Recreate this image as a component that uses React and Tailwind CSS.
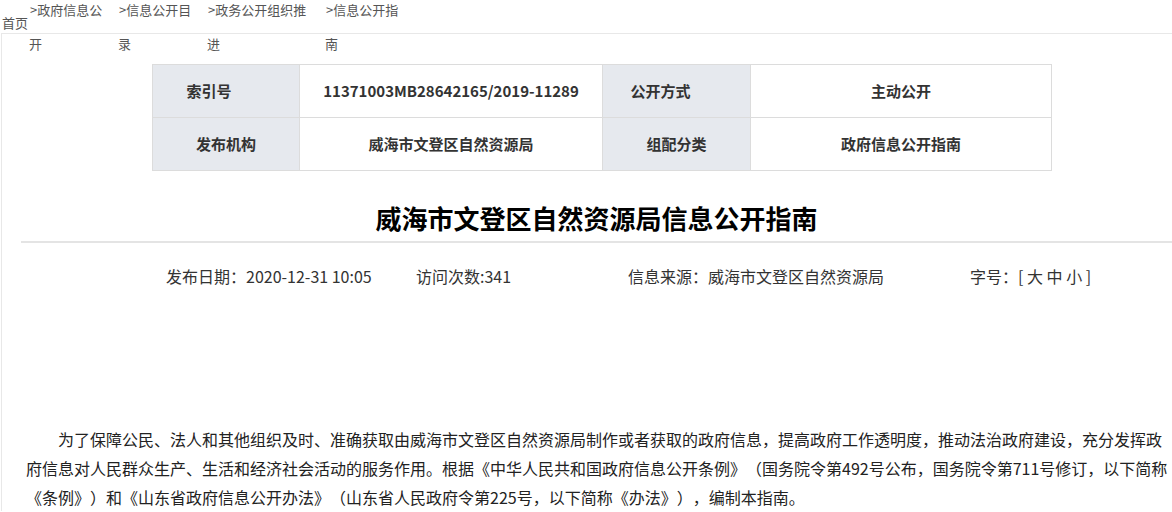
export default function App() {
  const font = { fontFamily: '"Microsoft YaHei", "Noto Sans CJK SC", "Noto Sans", sans-serif' };
  const crumbs = [
    { top: ">政府信息公", bottom: "开", w: "w-[89px]" },
    { top: ">信息公开目", bottom: "录", w: "w-[89px]" },
    { top: ">政务公开组织推", bottom: "进", w: "w-[118px]" },
    { top: ">信息公开指", bottom: "南", w: "w-[100px]" },
  ];
  return (
    <div className="w-[1172px] min-h-[512px] bg-white overflow-hidden text-[#333] [text-spacing-trim:space-all]" style={font}>
      {/* breadcrumb first line */}
      <div className="relative h-[33px] text-[13px] text-[#555]">
        <div className="flex pl-[30px] leading-[20px]">
          {crumbs.map((c) => (
            <div key={c.top} className={c.w + " whitespace-nowrap"}>{c.top}</div>
          ))}
        </div>
        <div className="absolute left-[2px] top-[13px] leading-[20px]">首页</div>
      </div>
      {/* box */}
      <div className="ml-[1px] border-t border-l border-[#e8e8e8]">
        <div className="flex pl-[27px] leading-[20px] text-[13px] text-[#555]">
          {crumbs.map((c) => (
            <div key={c.bottom} className={c.w}>{c.bottom}</div>
          ))}
        </div>

        <div className="mt-[10px] ml-[150px]">
          <table className="border-collapse text-[15px] font-bold text-[#333]">
            <tbody>
              <tr className="h-[53px]">
                <td className="w-[147px] border border-[#dcdcdc] bg-[#e6e9ee] text-center pr-[34px]">索引号</td>
                <td className="w-[303px] border border-[#dcdcdc] text-center">11371003MB28642165/2019-11289</td>
                <td className="w-[148px] border border-[#dcdcdc] bg-[#e6e9ee] text-center pr-[32px]">公开方式</td>
                <td className="w-[301px] border border-[#dcdcdc] text-center">主动公开</td>
              </tr>
              <tr className="h-[53px]">
                <td className="border border-[#dcdcdc] bg-[#e6e9ee] text-center">发布机构</td>
                <td className="border border-[#dcdcdc] text-center">威海市文登区自然资源局</td>
                <td className="border border-[#dcdcdc] bg-[#e6e9ee] text-center">组配分类</td>
                <td className="border border-[#dcdcdc] text-center">政府信息公开指南</td>
              </tr>
            </tbody>
          </table>
        </div>

        <div className="ml-[19px]">
          <h1 className="mt-[27px] text-center text-[26px] leading-[40px] font-bold text-black">
            威海市文登区自然资源局信息公开指南
          </h1>
          <div className="mt-[3px] h-[2px] bg-[#e4e4e4]" />

          <div className="mt-[21px] flex text-[16px] leading-[24px] text-[#333] pl-[145px] whitespace-nowrap">
            <span className="w-[250px]">发布日期：2020-12-31 10:05</span>
            <span className="w-[212px]">访问次数:341</span>
            <span className="w-[342px]">信息来源：威海市文登区自然资源局</span>
            <span>字号：[ 大 中 小 ]</span>
          </div>

          <p className="mt-[137px] pl-[5px] text-[16px] leading-[28.8px] text-[#222] indent-[2em]">
            为了保障公民、法人和其他组织及时、准确获取由威海市文登区自然资源局制作或者获取的政府信息，提高政府工作透明度，推动法治政府建设，充分发挥政府信息对人民群众生产、生活和经济社会活动的服务作用。根据《中华人民共和国政府信息公开条例》（国务院令第492号公布，国务院令第711号修订，以下简称《条例》）和《山东省政府信息公开办法》（山东省人民政府令第225号，以下简称《办法》），编制本指南。
          </p>
        </div>
      </div>
    </div>
  );
}
